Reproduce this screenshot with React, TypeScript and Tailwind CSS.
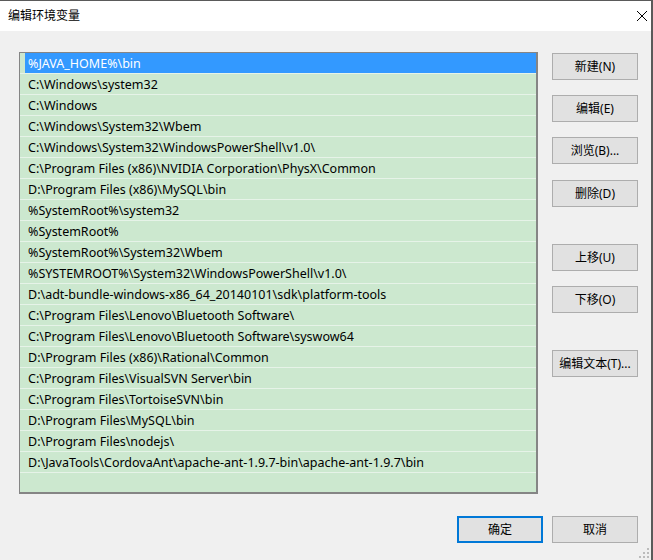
import React from 'react';

const paths = [
  '%JAVA_HOME%\\bin',
  'C:\\Windows\\system32',
  'C:\\Windows',
  'C:\\Windows\\System32\\Wbem',
  'C:\\Windows\\System32\\WindowsPowerShell\\v1.0\\',
  'C:\\Program Files (x86)\\NVIDIA Corporation\\PhysX\\Common',
  'D:\\Program Files (x86)\\MySQL\\bin',
  '%SystemRoot%\\system32',
  '%SystemRoot%',
  '%SystemRoot%\\System32\\Wbem',
  '%SYSTEMROOT%\\System32\\WindowsPowerShell\\v1.0\\',
  'D:\\adt-bundle-windows-x86_64_20140101\\sdk\\platform-tools',
  'C:\\Program Files\\Lenovo\\Bluetooth Software\\',
  'C:\\Program Files\\Lenovo\\Bluetooth Software\\syswow64',
  'D:\\Program Files (x86)\\Rational\\Common',
  'C:\\Program Files\\VisualSVN Server\\bin',
  'C:\\Program Files\\TortoiseSVN\\bin',
  'D:\\Program Files\\MySQL\\bin',
  'D:\\Program Files\\nodejs\\',
  'D:\\JavaTools\\CordovaAnt\\apache-ant-1.9.7-bin\\apache-ant-1.9.7\\bin',
];

const font = { fontFamily: '"Noto Sans", "Noto Sans CJK SC", sans-serif' };

const Btn = ({ label, className = '', primary = false }: { label: string; className?: string; primary?: boolean }) => (
  <div
    className={`w-[86px] h-[27px] flex items-center justify-center bg-[#e1e1e1] text-[12px] text-black ${
      primary ? 'border-2 border-[#0078d7]' : 'border border-[#adadad]'
    } ${className}`}
  >
    {label}
  </div>
);

export default function App() {
  return (
    <div
      className="w-[653px] h-[560px] bg-[#f0f0f0] border-t border-r-2 border-[#5a5a5a] flex flex-col overflow-hidden"
      style={font}
    >
      {/* Title bar */}
      <div className="h-[30px] bg-white flex items-center justify-between pl-[8px] pr-[3px] shrink-0">
        <span className="text-[12px] text-black">编辑环境变量</span>
        <svg width="12" height="12" viewBox="0 0 12 12">
          <path d="M1 1 L11 11 M11 1 L1 11" stroke="#000" strokeWidth="1" />
        </svg>
      </div>

      <div className="flex-1 flex flex-col">
        <div className="flex">
          {/* List */}
          <div className="ml-[19px] mt-[21px] w-[519px] h-[442px] border-l border-t border-r-2 border-b-2 border-[#858585] bg-[#cce8cf]">
            {paths.map((p, i) => (
              <div key={i} className="h-[21px] border-b border-[#e6f3e8] flex">
                {i === 0 ? (
                  <div className="ml-[5px] flex-1 h-full bg-[#3399ff] text-white text-[12.5px] flex items-center pl-[3px] pt-[3px]">
                    {p}
                  </div>
                ) : (
                  <div className="flex-1 h-full text-black text-[12.5px] flex items-center pl-[8px] pt-[3px]">{p}</div>
                )}
              </div>
            ))}
          </div>

          {/* Side buttons */}
          <div className="ml-[14px] mt-[22px] flex flex-col">
            <Btn label="新建(N)" />
            <Btn label="编辑(E)" className="mt-[15px]" />
            <Btn label="浏览(B)..." className="mt-[15px]" />
            <Btn label="删除(D)" className="mt-[16px]" />
            <Btn label="上移(U)" className="mt-[37px]" />
            <Btn label="下移(O)" className="mt-[15px]" />
            <Btn label="编辑文本(T)..." className="mt-[37px]" />
          </div>
        </div>

        {/* Bottom buttons */}
        <div className="flex justify-end mt-[22px] pr-[13px] gap-[9px]">
          <Btn label="确定" primary />
          <Btn label="取消" />
        </div>

        <div className="flex-1 flex justify-end items-end pr-[1px] pb-[1px]">
          <svg width="11" height="11" viewBox="0 0 11 11">
            <rect x="8" y="0" width="2" height="2" fill="#bcbcbc" />
            <rect x="4" y="4" width="2" height="2" fill="#bcbcbc" />
            <rect x="8" y="4" width="2" height="2" fill="#bcbcbc" />
            <rect x="0" y="8" width="2" height="2" fill="#bcbcbc" />
            <rect x="4" y="8" width="2" height="2" fill="#bcbcbc" />
            <rect x="8" y="8" width="2" height="2" fill="#bcbcbc" />
          </svg>
        </div>
      </div>
    </div>
  );
}
